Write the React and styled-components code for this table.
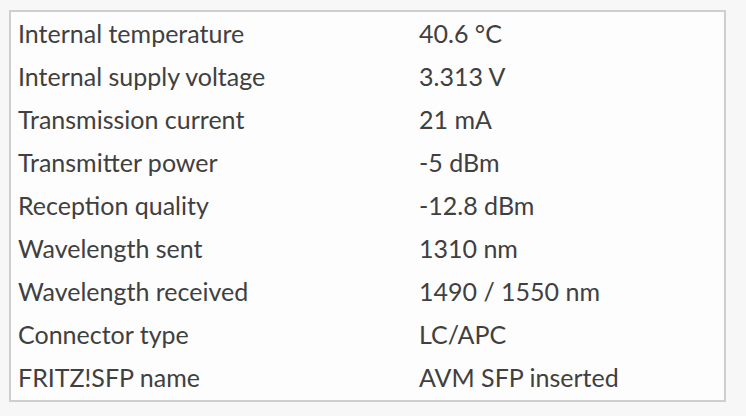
import styled, { createGlobalStyle } from 'styled-components'

const Global = createGlobalStyle`
  html, body {
    margin: 0;
    padding: 0;
    background: #f7f7f7;
  }
  body {
    font-family: Lato, "Liberation Sans", sans-serif;
  }
`

const Page = styled.div`
  width: 746px;
  height: 416px;
  padding: 10px 0 0 9px;
  box-sizing: border-box;
`

const Box = styled.div`
  width: 717px;
  height: 392px;
  box-sizing: border-box;
  border: 2px solid #cfcfcf;
  background: #fdfdfd;
  padding: 0 0 0 7px;
`

const Row = styled.div`
  display: grid;
  grid-template-columns: 401px 1fr;
  height: 43px;
  align-items: center;
  font-size: 25px;
  color: #404040;
`

const Cell = styled.div`
  white-space: nowrap;
  line-height: 1;
`

const rows = [
  ['Internal temperature', '40.6 °C'],
  ['Internal supply voltage', '3.313 V'],
  ['Transmission current', '21 mA'],
  ['Transmitter power', '-5 dBm'],
  ['Reception quality', '-12.8 dBm'],
  ['Wavelength sent', '1310 nm'],
  ['Wavelength received', '1490 / 1550 nm'],
  ['Connector type', 'LC/APC'],
  ['FRITZ!SFP name', 'AVM SFP inserted'],
]

const App = () => {
  return (
    <Page>
      <Global />
      <Box>
        {rows.map(([label, value]) => (
          <Row key={label}>
            <Cell>{label}</Cell>
            <Cell>{value}</Cell>
          </Row>
        ))}
      </Box>
    </Page>
  )
}

export default App
